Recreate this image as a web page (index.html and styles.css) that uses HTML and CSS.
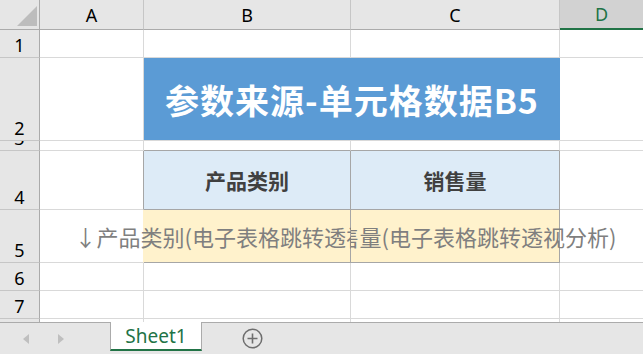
FILE: index.html
```html
<!DOCTYPE html>
<html lang="zh-CN">
<head>
    <meta charset="UTF-8">
    <meta name="viewport" content="width=device-width, initial-scale=1.0">
    <title>Sheet1</title>
    <link rel="stylesheet" href="styles.css">
</head>
<body>
    <div class="sheet">
        <div class="grid">
            <!-- column headers -->
            <div class="corner">
                <svg width="20" height="20" viewBox="0 0 20 20"><polygon points="20,0 20,20 0,20" fill="#BDBDBD"/></svg>
            </div>
            <div class="col-head">A</div>
            <div class="col-head">B</div>
            <div class="col-head">C</div>
            <div class="col-head selected">D</div>

            <!-- row 1 -->
            <div class="row-head">1</div>
            <div class="cell"></div>
            <div class="cell"></div>
            <div class="cell"></div>
            <div class="cell"></div>

            <!-- row 2 -->
            <div class="row-head">2</div>
            <div class="cell"></div>
            <div class="title">参数来源-单元格数据B5</div>
            <div class="cell"></div>

            <!-- row 3 -->
            <div class="row-head">3</div>
            <div class="cell"></div>
            <div class="cell above-table"></div>
            <div class="cell above-table"></div>
            <div class="cell"></div>

            <!-- row 4 -->
            <div class="row-head">4</div>
            <div class="cell left-of-table"></div>
            <div class="th">产品类别</div>
            <div class="th">销售量</div>
            <div class="cell"></div>

            <!-- row 5 -->
            <div class="row-head">5</div>
            <div class="cell left-of-value"></div>
            <div class="val spill-left">↓产品类别(电子表格跳转透视分析)</div>
            <div class="val spill-right">↓销售量(电子表格跳转透视分析)</div>
            <div class="cell"></div>

            <!-- rows 6-8 -->
            <div class="row-head">6</div>
            <div class="cell"></div>
            <div class="cell"></div>
            <div class="cell"></div>
            <div class="cell"></div>

            <div class="row-head">7</div>
            <div class="cell"></div>
            <div class="cell"></div>
            <div class="cell"></div>
            <div class="cell"></div>

            <div class="row-head">8</div>
            <div class="cell"></div>
            <div class="cell"></div>
            <div class="cell"></div>
            <div class="cell"></div>
        </div>
    </div>

    <div class="tabbar">
        <div class="tab-nav">
            <svg class="nav-arrow" width="7" height="10" viewBox="0 0 7 10"><polygon points="6,0 6,10 0,5" fill="#BFBFBF"/></svg>
            <svg class="nav-arrow" width="7" height="10" viewBox="0 0 7 10"><polygon points="1,0 1,10 7,5" fill="#BFBFBF"/></svg>
        </div>
        <div class="tab">Sheet1</div>
        <svg class="add-sheet" width="21" height="21" viewBox="0 0 21 21">
            <circle cx="10.5" cy="10.5" r="9.3" fill="none" stroke="#6E6E6E" stroke-width="1.5"/>
            <path d="M10.5 5.5 V15.5 M5.5 10.5 H15.5" stroke="#6E6E6E" stroke-width="1.6"/>
        </svg>
    </div>
</body>
</html>
```

FILE: styles.css
```css
/* Base */
* {
    margin: 0;
    padding: 0;
    box-sizing: border-box;
}

body {
    width: 643px;
    height: 354px;
    overflow: hidden;
    background: #fff;
    font-family: "Noto Sans", "Noto Sans CJK SC", sans-serif;
}

/* Worksheet grid */
.sheet {
    height: 322px;
    overflow: hidden;
}

.grid {
    display: grid;
    grid-template-columns: 40px 104px 207px 209px 84px;
    grid-template-rows: 30px 28px 83px 10px 59px 53px 28px 28px 28px;
}

.corner {
    background: #E6E6E6;
    border-right: 1px solid #ABABAB;
    border-bottom: 1px solid #ABABAB;
    display: flex;
    justify-content: flex-end;
    align-items: flex-end;
    padding: 0 2px 3px 0;
}

.col-head {
    background: #E6E6E6;
    border-right: 1px solid #C6C6C6;
    border-bottom: 1px solid #ABABAB;
    display: flex;
    align-items: center;
    justify-content: center;
    font-size: 18px;
    color: #000;
}

.col-head.selected {
    background: #D2D2D2;
    color: #217346;
    border-bottom: 2px solid #217346;
}

.row-head {
    background: #E6E6E6;
    border-right: 1px solid #ABABAB;
    border-bottom: 1px solid #C6C6C6;
    display: flex;
    align-items: flex-end;
    justify-content: center;
    overflow: hidden;
    font-size: 18px;
    line-height: 1;
    padding-bottom: 3px;
    color: #000;
}

.cell {
    border-right: 1px solid #D9D9D9;
    border-bottom: 1px solid #D9D9D9;
}

.above-table {
    border-bottom-color: #A6A6A6;
}

.left-of-table {
    border-right-color: #A6A6A6;
}

.left-of-value {
    border-right-color: #FFF2CC;
}

/* Title block */
.title {
    grid-column: span 2;
    background: #5B9BD5;
    border-bottom: 1px solid #D9D9D9;
    color: #fff;
    font-family: "Noto Sans CJK SC", sans-serif;
    font-weight: bold;
    font-size: 34px;
    letter-spacing: 1px;
    display: flex;
    align-items: center;
    justify-content: center;
}

/* Table header */
.th {
    background: #DDEBF7;
    border-right: 1px solid #A6A6A6;
    border-bottom: 1px solid #A6A6A6;
    color: #404040;
    font-family: "Noto Sans CJK SC", sans-serif;
    font-weight: bold;
    font-size: 21px;
    display: flex;
    align-items: center;
    justify-content: center;
}

/* Value row, text spills into neighbours */
.val {
    background: #FFF2CC;
    border-right: 1px solid #A6A6A6;
    border-bottom: 1px solid #A6A6A6;
    color: #7F7F7F;
    font-family: "Noto Sans CJK SC", sans-serif;
    font-size: 22px;
    white-space: nowrap;
    display: flex;
    align-items: center;
    justify-content: center;
}

.spill-left {
    clip-path: inset(0 0 0 -300px);
}

.spill-right {
    clip-path: inset(0 -300px 0 0);
}

/* Sheet tabs */
.tabbar {
    height: 32px;
    background: #E6E6E6;
    border-top: 1px solid #ABABAB;
    display: flex;
    align-items: flex-start;
}

.tab-nav {
    width: 110px;
    height: 31px;
    display: flex;
    align-items: center;
    padding-left: 23px;
    gap: 27px;
}

.tab {
    width: 92px;
    height: 29px;
    margin-top: -1px;
    background: #fff;
    border-left: 1px solid #ABABAB;
    border-right: 1px solid #ABABAB;
    border-bottom: 2px solid #217346;
    color: #217346;
    font-size: 19px;
    display: flex;
    align-items: center;
    justify-content: center;
}

.add-sheet {
    margin: 5px 0 0 40px;
}
```
